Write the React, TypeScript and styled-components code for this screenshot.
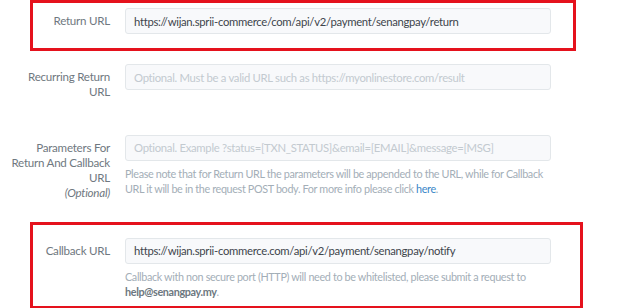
import React from "react";
import styled, { createGlobalStyle, css } from "styled-components";

const Global = createGlobalStyle`
  html, body { margin: 0; padding: 0; background: #ffffff; }
  body {
    font-family: "Lato", "Liberation Sans", sans-serif;
    font-size: 10.8px;
    letter-spacing: -0.35px;
    color: #5f6b75;
  }
  * { box-sizing: border-box; }
`;

const Page = styled.div`
  position: relative;
  width: 621px;
  height: 308px;
  overflow: hidden;
  padding-top: 8px;
`;

type Box = { top: number; left: number; right: number; bottom: number };

const Row = styled.div<{ $mt: number; $box?: Box }>`
  position: relative;
  display: grid;
  grid-template-columns: 110px 426px;
  column-gap: 15px;
  margin-top: ${(p) => p.$mt}px;
  ${(p) =>
    p.$box &&
    css`
      &::after {
        content: "";
        position: absolute;
        top: ${p.$box.top}px;
        left: ${p.$box.left}px;
        right: ${p.$box.right}px;
        bottom: ${p.$box.bottom}px;
        border: 3.5px solid #e5121d;
        pointer-events: none;
      }
    `}
`;

const Label = styled.label`
  text-align: right;
  color: #6f7880;
  line-height: 15.3px;
  padding-top: 5px;
  font-size: 11.6px;
  letter-spacing: -0.25px;
`;

const Optional = styled.em`
  display: block;
  font-style: italic;
`;

const Field = styled.div`
  display: flex;
  flex-direction: column;
`;

const Input = styled.div<{ $placeholder?: boolean }>`
  height: 26px;
  border: 1px solid #e3e7ea;
  border-radius: 3px;
  background: #f8f9fb;
  padding: 0 8px;
  display: flex;
  align-items: center;
  white-space: nowrap;
  overflow: hidden;
  font-size: 11.3px;
  letter-spacing: -0.3px;
  color: ${(p) => (p.$placeholder ? "#c3cad0" : "#3e454c")};
`;

const Help = styled.p`
  margin: 5px 0 0;
  line-height: 15px;
  color: #a3aeb7;
`;

const Link = styled.a`
  color: #3a86c8;
  text-decoration: none;
`;

const Strong = styled.strong`
  color: #6c7780;
  font-weight: 700;
`;

export default function App() {
  return (
    <>
      <Global />
      <Page>
        <Row $mt={0} $box={{ top: -8, left: 30, right: 45, bottom: -17 }}>
          <Label>Return URL</Label>
          <Field>
            <Input>https://wijan.sprii-commerce/com/api/v2/payment/senangpay/return</Input>
          </Field>
        </Row>
        <Row $mt={30}>
          <Label>
            Recurring Return
            <br />
            URL
          </Label>
          <Field>
            <Input $placeholder>Optional. Must be a valid URL such as https://myonlinestore.com/result</Input>
          </Field>
        </Row>
        <Row $mt={35}>
          <Label>
            Parameters For
            <br />
            Return And Callback
            <br />
            URL
            <Optional>(Optional)</Optional>
          </Label>
          <Field>
            <Input $placeholder>Optional. Example ?status=[TXN_STATUS]&amp;email=[EMAIL]&amp;message=[MSG]</Input>
            <Help>
              Please note that for Return URL the parameters will be appended to the URL, while for Callback URL it
              will be in the request POST body. For more info please click <Link href="#">here</Link>.
            </Help>
          </Field>
        </Row>
        <Row $mt={37} $box={{ top: -16, left: 30, right: 38, bottom: -10 }}>
          <Label>Callback URL</Label>
          <Field>
            <Input>https://wijan.sprii-commerce.com/api/v2/payment/senangpay/notify</Input>
            <Help>
              Callback with non secure port (HTTP) will need to be whitelisted, please submit a request to{" "}
              <Strong>help@senangpay.my</Strong>.
            </Help>
          </Field>
        </Row>
      </Page>
    </>
  );
}
